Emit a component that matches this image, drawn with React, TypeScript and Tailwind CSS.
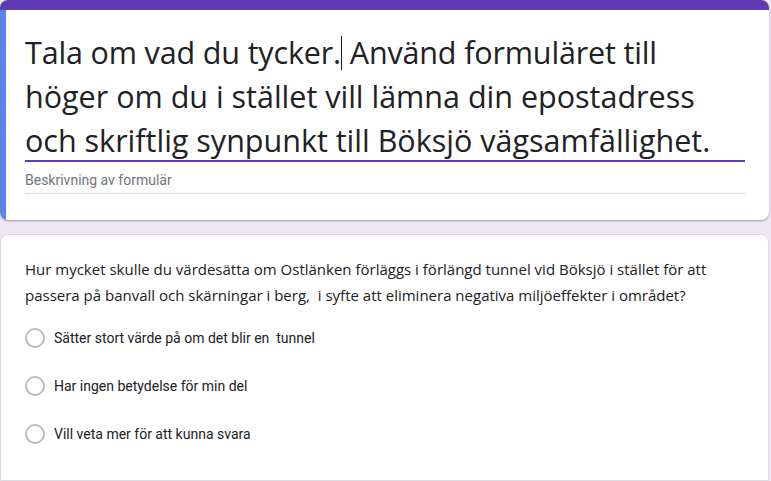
import React from "react";

const options = [
  "Sätter stort värde på om det blir en  tunnel",
  "Har ingen betydelse för min del",
  "Vill veta mer för att kunna svara",
];

export default function App() {
  return (
    <div className="w-[771px] h-[481px] overflow-hidden bg-[#ede7f6] flex flex-col gap-[14px]">
      <div className="w-[769px] h-[220px] shrink-0 rounded-[8px] bg-white shadow-[0_1px_2px_rgba(0,0,0,0.35)] overflow-hidden flex flex-col">
        <div className="h-[10px] bg-[#5f3bb2] shrink-0" />
        <div className="flex flex-1">
          <div className="w-[6px] bg-[#5b86e5] shrink-0" />
          <div className="flex-1 pl-[19px] pr-[24px] pt-[20px]">
            <div
              className="h-[132px] text-[30.5px] leading-[44px] text-[#202124] border-b-2 border-[#5f3bb2] whitespace-pre-wrap"
              style={{ fontFamily: "'Open Sans', sans-serif" }}
            >
              <div className="tracking-[-0.15px]">
                Tala om vad du tycker.<span className="inline-block w-[1px] h-[34px] bg-[#202124] align-[-6px]" /> Använd formuläret till
              </div>
              <div>höger om du i stället vill lämna din epostadress</div>
              <div>och skriftlig synpunkt till Böksjö vägsamfällighet.</div>
            </div>
            <div
              className="mt-[8px] text-[14px] leading-[20px] text-[#70757a] border-b border-[#dadce0] pb-[3px]"
              style={{ fontFamily: "Roboto, sans-serif" }}
            >
              Beskrivning av formulär
            </div>
          </div>
        </div>
      </div>
      <div className="w-[769px] flex-1 rounded-t-[8px] bg-white border border-[#dadce0] pl-[24px] pr-[24px] pt-[21px]">
        <div
          className="text-[15px] leading-[26px] text-[#202124] whitespace-pre-wrap"
          style={{ fontFamily: "'Open Sans', sans-serif" }}
        >
          Hur mycket skulle du värdesätta om Ostlänken förläggs i förlängd tunnel vid Böksjö i stället för att passera på banvall och skärningar i berg,  i syfte att eliminera negativa miljöeffekter i området?
        </div>
        <div className="mt-[20px] flex flex-col gap-[28px]">
          {options.map((o) => (
            <div key={o} className="flex items-center gap-[9px]">
              <div className="w-[20px] h-[20px] rounded-full border-2 border-[#bdbdbd] shrink-0" />
              <span
                className="text-[14px] leading-[20px] text-[#202124] whitespace-pre"
                style={{ fontFamily: "Roboto, sans-serif" }}
              >
                {o}
              </span>
            </div>
          ))}
        </div>
      </div>
    </div>
  );
}
